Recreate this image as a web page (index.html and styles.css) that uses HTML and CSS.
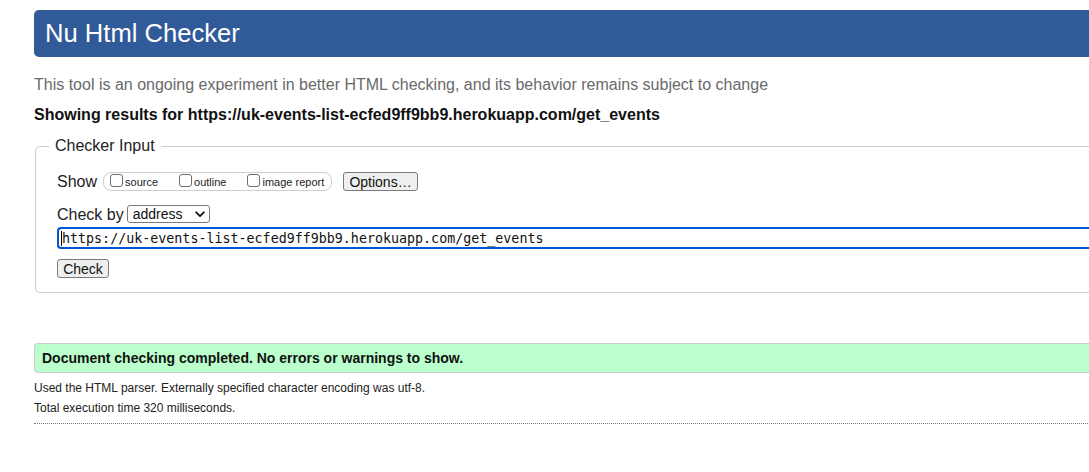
FILE: index.html
```html
<!DOCTYPE html>
<html lang="en">
<head>
<meta charset="utf-8">
<title>Nu Html Checker</title>
<link rel="stylesheet" href="styles.css">
</head>
<body>
<div class="page">
  <h1 class="title">Nu Html Checker</h1>
  <p class="about">This tool is an ongoing experiment in better HTML checking, and its behavior remains subject to change</p>
  <p class="showing">Showing results for https://uk-events-list-ecfed9ff9bb9.herokuapp.com/get_events</p>
  <fieldset class="input-box">
    <legend class="legend">Checker Input</legend>
    <div class="row show-row">
      <span class="row-label">Show</span>
      <span class="opts">
        <span class="opt"><span class="cb"></span>source</span>
        <span class="opt"><span class="cb"></span>outline</span>
        <span class="opt"><span class="cb"></span>image report</span>
      </span>
      <span class="btn btn-options">Options…</span>
    </div>
    <div class="row by-row">
      <span class="row-label">Check by</span>
      <span class="select">address
        <svg class="chev" width="10" height="7" viewBox="0 0 10 7"><path d="M1.2 1.3 L5 5.1 L8.8 1.3" fill="none" stroke="#111" stroke-width="1.8" stroke-linecap="round" stroke-linejoin="round"/></svg>
      </span>
    </div>
    <div class="url"><span class="caret"></span>https://uk-events-list-ecfed9ff9bb9.herokuapp.com/get_events</div>
    <div class="row check-row"><span class="btn btn-check">Check</span></div>
  </fieldset>
  <p class="success">Document checking completed. No errors or warnings to show.</p>
  <p class="small">Used the HTML parser. Externally specified character encoding was utf-8.</p>
  <p class="small">Total execution time 320 milliseconds.</p>
  <div class="dotted"></div>
</div>
</body>
</html>
```

FILE: styles.css
```css
html, body {
  margin: 0;
  padding: 0;
  background: #ffffff;
  overflow: hidden;
}

body {
  font-family: "Liberation Sans", Arial, Helvetica, sans-serif;
  color: #111;
}

.page {
  width: 1200px;
  padding-left: 34px;
}

.title {
  margin: 10px 0 0;
  height: 47px;
  line-height: 47px;
  padding-left: 11px;
  font-size: 25.6px;
  font-weight: normal;
  color: #ffffff;
  background: #315a98;
  border-radius: 5px 0 0 5px;
}

.about {
  margin: 18px 0 0;
  font-size: 16px;
  line-height: 20px;
  color: #6a6a6a;
}

.showing {
  margin: 10px 0 0;
  font-size: 16px;
  line-height: 20px;
  font-weight: bold;
  color: #111;
}

.input-box {
  margin: 11px 0 0 1px;
  padding: 0 0 14px 21px;
  border: 1px solid #cccccc;
  border-radius: 5px 0 0 5px;
  min-width: 0;
}

.legend {
  margin-left: -8px;
  padding: 0 6px;
  font-size: 16px;
  line-height: 20px;
  color: #222;
}

.row {
  display: flex;
  align-items: center;
}

.show-row {
  margin-top: 16px;
  height: 19px;
}

.row-label {
  font-size: 16px;
  line-height: 19px;
  color: #222;
}

.opts {
  display: inline-flex;
  align-items: center;
  gap: 21px;
  box-sizing: border-box;
  height: 19px;
  width: 229px;
  margin-left: 6px;
  padding-left: 6px;
  border: 1px solid #cfcfcf;
  border-radius: 8px;
  font-size: 11px;
  color: #222;
}

.opt {
  display: inline-flex;
  align-items: center;
  gap: 2px;
}

.cb {
  display: inline-block;
  box-sizing: border-box;
  width: 13px;
  height: 13px;
  margin-top: -3px;
  border: 1px solid #6f6f6f;
  border-radius: 3px;
  background: #fff;
}

.btn {
  display: inline-flex;
  align-items: center;
  justify-content: center;
  box-sizing: border-box;
  height: 19px;
  border: 1px solid #7a7a7a;
  border-radius: 3px;
  background: #efefef;
  font-size: 14px;
  color: #111;
}

.btn-options {
  margin-left: 11px;
  width: 75px;
}

.by-row {
  margin-top: 14px;
  height: 18px;
}

.select {
  display: inline-flex;
  align-items: center;
  justify-content: space-between;
  box-sizing: border-box;
  width: 83px;
  height: 18px;
  margin-left: 3px;
  padding: 0 4px 0 5px;
  border: 1px solid #7a7a7a;
  border-radius: 3px;
  background: #fff;
  font-size: 14px;
  color: #111;
}

.chev {
  display: block;
}

.url {
  display: flex;
  align-items: center;
  box-sizing: border-box;
  margin-top: 4px;
  height: 22px;
  padding-left: 2px;
  border: 2px solid #0057d6;
  border-right: none;
  border-radius: 4px 0 0 4px;
  font-family: "DejaVu Sans Mono", "Liberation Mono", monospace;
  font-size: 13.33px;
  color: #111;
  white-space: nowrap;
}

.caret {
  display: inline-block;
  width: 1px;
  height: 15px;
  background: #000;
}

.check-row {
  margin-top: 10px;
}

.btn-check {
  width: 52px;
}

.success {
  margin: 50px 0 0;
  box-sizing: border-box;
  height: 30px;
  line-height: 28px;
  padding-left: 7px;
  border: 1px solid #cccccc;
  border-right: none;
  border-radius: 4px 0 0 4px;
  background: #bbffcc;
  font-size: 14px;
  font-weight: bold;
  color: #111;
}

.small {
  margin: 0;
  font-size: 12px;
  line-height: 20px;
  color: #222;
}

.success + .small {
  margin-top: 5px;
}

.dotted {
  margin-top: 5px;
  border-top: 1px dotted #777;
}
```
